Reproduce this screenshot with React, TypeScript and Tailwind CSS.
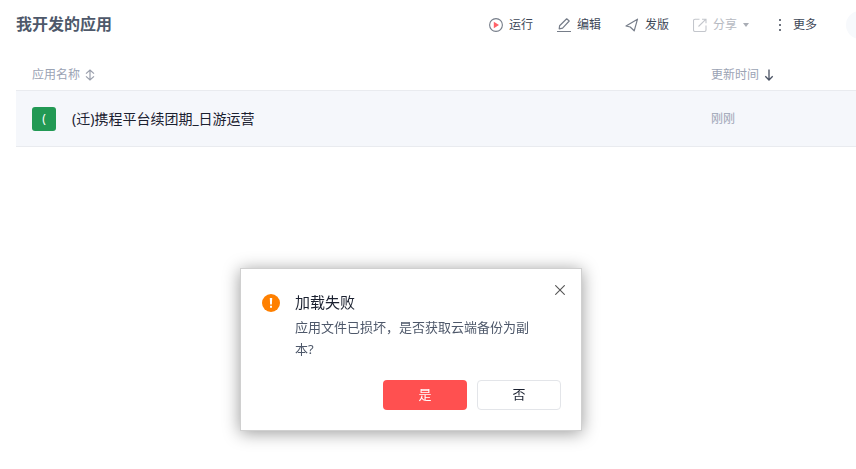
import React from "react";

interface ToolButtonProps {
  icon: React.ReactNode;
  label: string;
  disabled?: boolean;
  children?: React.ReactNode;
}

const ToolButton: React.FC<ToolButtonProps> = ({ icon, label, disabled, children }) => (
  <button
    type="button"
    disabled={disabled}
    className="flex h-6 items-center gap-1.5 text-xs text-[#3d4757] disabled:text-[#b6bac2]"
  >
    {icon}
    <span>{label}</span>
    {children}
  </button>
);

const RunIcon = () => (
  <svg width="14" height="14" viewBox="0 0 14 14" fill="none">
    <circle cx="7" cy="7" r="6.4" stroke="#767d89" strokeWidth="1.1" />
    <path d="M4.8 3.8 10 7 4.8 10.2Z" fill="#ff6268" />
  </svg>
);

const EditIcon = () => (
  <svg width="14" height="14" viewBox="0 0 14 14" fill="none" stroke="#767d89">
    <path d="M0 13.5h14" />
    <path d="M9.7.8 12.2 3 5.6 10.1 2.2 10.8 2.6 7.8Z" strokeWidth="1.2" strokeLinejoin="round" />
  </svg>
);

const PublishIcon = () => (
  <svg width="14" height="14" viewBox="0 0 14 14" fill="none" stroke="#767d89" strokeWidth="1.2">
    <path d="M12.5 1.2 1 8 5.2 9 9.2 12.8Z" strokeLinejoin="round" />
  </svg>
);

const ShareIcon = () => (
  <svg width="14" height="14" viewBox="0 0 14 14" fill="none" stroke="#c3c6cc" strokeWidth="1.1">
    <path d="M6.5 1.2H2A1.5 1.5 0 0 0 .5 2.7V12A1.5 1.5 0 0 0 2 13.5h9.5A1.5 1.5 0 0 0 13 12V7.5" />
    <path d="M5.5 8.5 13 1.2M9 1.2h4v4" />
  </svg>
);

const MoreIcon = () => (
  <svg width="14" height="14" viewBox="0 0 14 14" fill="#6f7580">
    <path d="M6 1h2v2H6zM6 6h2v2H6zM6 11h2v2H6z" />
  </svg>
);

const SortIcon = () => (
  <svg width="10" height="12" viewBox="0 0 10 12" fill="none" stroke="#9a9fac" strokeWidth="1.2">
    <path d="M5 1v10M1 4.6 5 1l4 3.6M1 7.4 5 11l4-3.6" />
  </svg>
);

const ArrowDownIcon = () => (
  <svg width="10" height="12" viewBox="0 0 10 12" fill="none" stroke="#4a5263" strokeWidth="1.3">
    <path d="M5 .5v10.3M1.3 7.3 5 11l3.7-3.7" />
  </svg>
);

const WarningIcon = () => (
  <svg width="18" height="18" viewBox="0 0 18 18" className="mt-[3px] shrink-0">
    <circle cx="9" cy="9" r="9" fill="#ff8000" />
    <path d="M7.8 4h2.4l-.3 6.4H8.1zM8 11.8h2v2H8z" fill="#fff" />
  </svg>
);

const Toolbar = () => (
  <div className="flex items-center gap-6 pt-px">
    <ToolButton icon={<RunIcon />} label="运行" />
    <ToolButton icon={<EditIcon />} label="编辑" />
    <ToolButton icon={<PublishIcon />} label="发版" />
    <ToolButton icon={<ShareIcon />} label="分享" disabled>
      <svg width="6" height="4" viewBox="0 0 6 4" fill="#a9adb5">
        <path d="M0 0h6L3 4Z" />
      </svg>
    </ToolButton>
    <ToolButton icon={<MoreIcon />} label="更多" />
    <div className="-mr-[18px] ml-[5px] h-7 w-7 rounded-full bg-[#f7f9fc]" />
  </div>
);

const AppTable = () => (
  <table className="w-full table-fixed text-left">
    <thead>
      <tr className="h-8 border-b border-[#e9ebef] text-xs text-[#9ba3b4]">
        <th className="px-4 pt-0.5 font-normal">
          <button type="button" className="flex items-center gap-[5px]">
            应用名称
            <SortIcon />
          </button>
        </th>
        <th className="w-[161px] px-4 pt-0.5 font-normal">
          <button type="button" className="flex items-center gap-[5px]">
            更新时间
            <ArrowDownIcon />
          </button>
        </th>
      </tr>
    </thead>
    <tbody>
      <tr className="h-14 border-b border-[#e9ebef] bg-[#f5f7fb]">
        <td className="px-4 pt-0.5">
          <div className="flex items-center gap-4">
            <span className="flex h-6 w-6 items-center justify-center rounded-[3px] bg-[#229954] text-xs text-white">
              (
            </span>
            <span className="text-sm text-[#1b2130]">(迁)携程平台续团期_日游运营</span>
          </div>
        </td>
        <td className="px-4 pt-0.5 text-xs text-[#9ba3b4]">刚刚</td>
      </tr>
    </tbody>
  </table>
);

const LoadFailedDialog = () => (
  <div
    role="alertdialog"
    aria-labelledby="dialog-title"
    aria-describedby="dialog-text"
    className="fixed top-[268px] left-60 w-[342px] border border-[#d0d0d0] bg-white p-5 shadow-[0_2px_16px_rgba(0,0,0,0.4)]"
  >
    <button type="button" aria-label="关闭" className="absolute top-4 right-4">
      <svg width="10" height="10" viewBox="0 0 10 10" fill="none" stroke="#555" strokeWidth="1.1">
        <path d="M.3.3l9.4 9.4M9.7.3.3 9.7" />
      </svg>
    </button>
    <div className="flex gap-[15px] pt-[2px] pl-px">
      <WarningIcon />
      <div className="pr-5">
        <h2 id="dialog-title" className="text-[15px] leading-[22px] text-[#1b2130]">
          加载失败
        </h2>
        <p id="dialog-text" className="mt-[3px] text-[13px] leading-[22px] text-[#4e586a]">
          应用文件已损坏，是否获取云端备份为副本?
        </p>
      </div>
    </div>
    <div className="mt-5 flex justify-end gap-2.5 text-[13px]">
      <button type="button" className="h-[30px] w-[84px] rounded bg-[#ff5050] text-white">
        是
      </button>
      <button
        type="button"
        className="h-[30px] w-[84px] rounded border border-[#e3e5e9] bg-white text-[#1b2130]"
      >
        否
      </button>
    </div>
  </div>
);

export default function App() {
  return (
    <div className="min-h-screen overflow-x-hidden bg-white pl-4 font-['Noto_Sans','Noto_Sans_CJK_SC',sans-serif]">
      <header className="flex h-12 items-center justify-between">
        <h1 className="text-base font-bold text-[#4e586a]">我开发的应用</h1>
        <Toolbar />
      </header>
      <main className="pt-2.5">
        <AppTable />
      </main>
      <LoadFailedDialog />
    </div>
  );
}
